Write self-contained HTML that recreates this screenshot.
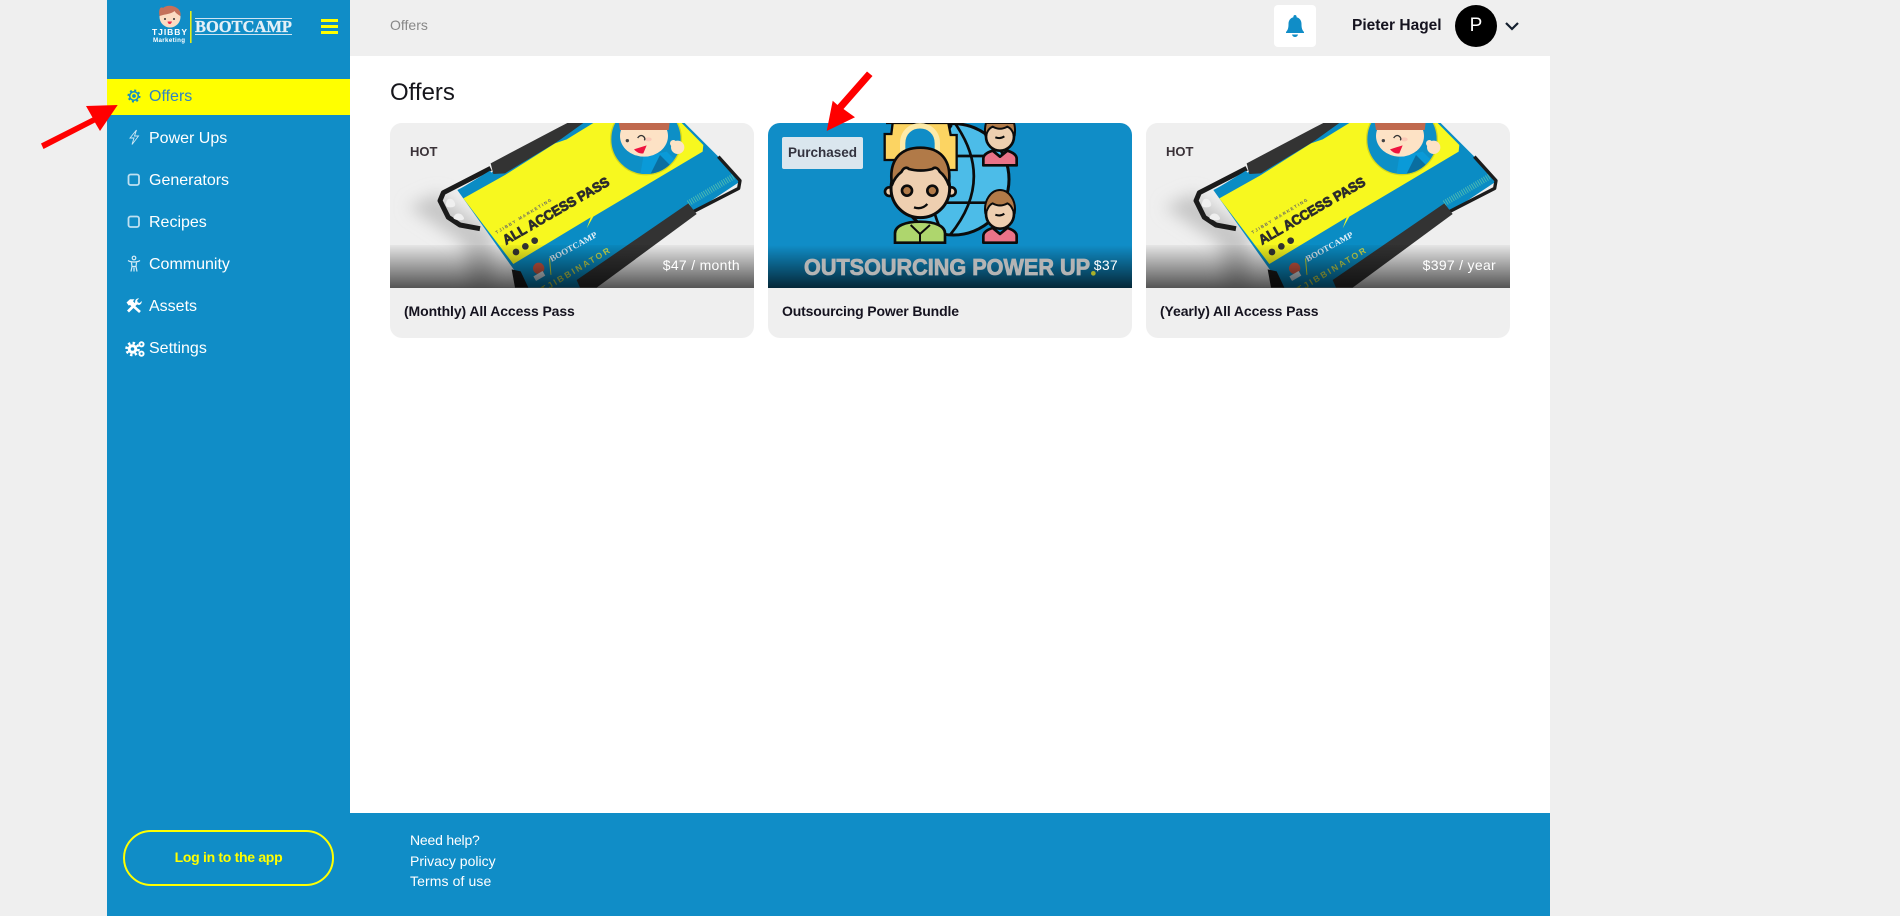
<!DOCTYPE html>
<html lang="en"><head><meta charset="utf-8"><title>Offers</title>
<style>
*{box-sizing:border-box}
html,body{margin:0;padding:0;width:1900px;height:916px;overflow:hidden;background:#efefef;font-family:"Liberation Sans",Arial,sans-serif;color:#111}
.a{position:absolute;white-space:nowrap}
#side{position:absolute;left:107px;top:0;width:243px;height:916px;background:#108dc7}
#main{position:absolute;left:350px;top:56px;width:1200px;height:757px;background:#fff}
#foot{position:absolute;left:107px;top:813px;width:1443px;height:103px;background:#108dc7}
#sel{position:absolute;left:107px;top:79px;width:243px;height:36px;background:#ff0}
.n{position:absolute;left:149px;font-size:16px;line-height:20px;color:#fff;white-space:nowrap}
.i{position:absolute;left:125px;width:18px;height:18px}
.card{position:absolute;top:123px;width:364px;height:215px;background:#efefef;border-radius:12px;overflow:hidden}
.card svg{position:absolute;left:0;top:0;width:364px;height:165px;display:block}
.tt{position:absolute;left:14px;top:179px;font-size:14px;line-height:18px;font-weight:bold;color:#15131f;white-space:nowrap;letter-spacing:-.1px}
.pr{position:absolute;right:14px;top:133px;font-size:14px;line-height:18px;color:#fff;white-space:nowrap;letter-spacing:.3px}
.hot{position:absolute;left:20px;top:20px;font-size:13px;line-height:18px;font-weight:bold;color:#3a3238}
.f{position:absolute;left:410px;font-size:14px;line-height:18px;color:#fff;white-space:nowrap}
</style></head><body>
<svg width="0" height="0" style="position:absolute"><defs>
<linearGradient id="g1" x1="0" y1="0" x2="0" y2="1"><stop offset="0" stop-color="#000" stop-opacity=".04"/><stop offset="1" stop-color="#000" stop-opacity=".65"/></linearGradient>
<linearGradient id="g2" x1="0" y1="0" x2="0" y2="1"><stop offset="0" stop-color="#000" stop-opacity="0"/><stop offset="1" stop-color="#000" stop-opacity=".72"/></linearGradient>
<filter id="b1" x="-40%" y="-40%" width="180%" height="180%"><feGaussianBlur stdDeviation="24"/></filter>
<clipPath id="cc"><circle cx="798" cy="88" r="104"/></clipPath>
</defs></svg>
<div id="side"></div><div id="main"></div><div id="foot"></div><div id="sel"></div>

<!-- logo -->
<svg class="a" style="left:150px;top:4px" width="150" height="42" viewBox="0 0 150 42">
<circle cx="20" cy="13" r="10.500" fill="#fcdcc3"/>
<path d="M9.500 12C8 5 11 2 13 4c3-3 10-3 14 0 3 2 4 5 3.500 8-2-1-5-3-6-5-3 3-9 3-15 5z" fill="#c5705a"/>
<circle cx="15" cy="15" r="1" fill="#333"/><circle cx="24" cy="15" r="1" fill="#333"/>
<path d="M17.500 17.500h4.500q-1 3-2.500 2.500-1.500 0-2-2.500z" fill="#ef2a4a"/>
<text x="2" y="31" font-family="Liberation Sans,sans-serif" font-size="8.500" font-weight="bold" fill="#fff" textLength="35">TJIBBY</text>
<text x="3" y="38" font-family="Liberation Sans,sans-serif" font-size="6.200" font-weight="bold" fill="#fff" textLength="32">Marketing</text>
<rect x="40" y="7" width="1.600" height="32" fill="#e3ee16"/>
<rect x="45" y="14" width="97" height="1" fill="#cfe4f1"/>
<rect x="45" y="30" width="97" height="1" fill="#cfe4f1"/>
<text x="45" y="28" font-family="Liberation Serif,serif" font-size="17" font-weight="bold" fill="#e4f0f7" stroke="#e4f0f7" stroke-width=".3" textLength="97" lengthAdjust="spacingAndGlyphs">BOOTCAMP</text>
</svg>
<svg class="a" style="left:321px;top:18px" width="17" height="16"><rect y="1" width="17" height="3" fill="#ff0"/><rect y="7" width="17" height="3" fill="#ff0"/><rect y="13" width="17" height="3" fill="#ff0"/></svg>

<!-- nav icons -->
<svg class="i" style="top:87px" viewBox="0 0 18 18" fill="none" stroke="#108dc7"><circle cx="9" cy="9" r="1.900" fill="#108dc7" stroke="none"/><circle cx="9" cy="9" r="4.300" stroke-width="1.500"/><circle cx="9" cy="9" r="5.700" stroke-width="1.700" stroke-dasharray="2 2.480"/></svg>
<svg class="i" style="top:128px" viewBox="0 0 18 18" fill="none" stroke="#cfe8f5" stroke-width=".9"><path d="M11.500 2 5 10h4l-2 6.500L13.500 8H9.500z"/></svg>
<svg class="i" style="top:171px" viewBox="0 0 18 18" fill="none" stroke="#bfe0f1" stroke-width="1.800"><rect x="3.500" y="3.500" width="10.500" height="10.500" rx="2"/></svg>
<svg class="i" style="top:213px" viewBox="0 0 18 18" fill="none" stroke="#bfe0f1" stroke-width="1.800"><rect x="3.500" y="3.500" width="10.500" height="10.500" rx="2"/></svg>
<svg class="i" style="top:255px" viewBox="0 0 18 18" fill="none" stroke="#d6ecf7" stroke-width="1.200"><circle cx="9" cy="3" r="1.800"/><path d="M3 5.500c3 2 9 2 12 0M6.500 7.500l.5 4-1 5M11.500 7.500l-.5 4 1 5M7 11.500h4M9 12.500v4"/></svg>
<svg class="i" style="top:297px" viewBox="0 0 18 18" fill="#fff"><path d="M6.500 7.500 15 15" stroke="#fff" stroke-width="2.700" fill="none"/><path d="M1.500 5.500 5 2.300h4.500L8 4.300 9.800 6.200 6.500 9.300 5 7.900 3.800 8.600z"/><path d="M3 14.500 12 5.500" stroke="#fff" stroke-width="2.700" fill="none"/><path d="M16.700 4 14.700 6 12.700 5.400 12.100 3.400 14.100 1.400C11.500 1 9.700 3 10.300 5.500L12.700 7.800C15 8.400 17 6.500 16.700 4z"/></svg>
<svg class="a" style="left:125px;top:340px" width="20" height="18" viewBox="0 0 20 18"><circle cx="7.500" cy="9" r="4.800" fill="#fff"/><circle cx="7.500" cy="9" r="6" fill="none" stroke="#fff" stroke-width="2.600" stroke-dasharray="2.400 2.300"/><circle cx="7.500" cy="9" r="1.800" fill="#108dc7"/><circle cx="16.500" cy="4.300" r="2.100" fill="none" stroke="#fff" stroke-width="1.900"/><circle cx="16.500" cy="13.700" r="2.100" fill="none" stroke="#fff" stroke-width="1.900"/></svg>

<!-- nav text -->
<div class="n" style="top:87px;color:#2f84c4">Offers</div>
<div class="n" style="top:129px">Power Ups</div>
<div class="n" style="top:171px">Generators</div>
<div class="n" style="top:213px">Recipes</div>
<div class="n" style="top:255px">Community</div>
<div class="n" style="top:297px">Assets</div>
<div class="n" style="top:339px">Settings</div>

<!-- top bar -->
<div class="a" style="left:390px;top:16px;font-size:14px;line-height:18px;color:#888">Offers</div>
<div class="a" style="left:1274px;top:5px;width:42px;height:42px;background:#fff;border-radius:4px"></div>
<svg class="a" style="left:1284px;top:14px" width="22" height="24" viewBox="0 0 22 24" fill="#108dc7"><path d="M11 1c-1 0-1.600.7-1.600 1.600v.6C6.200 4 4.500 6.500 4.500 10c0 4-.6 6-2.500 8v1h18v-1c-1.900-2-2.500-4-2.500-8 0-3.500-1.700-6-4.900-6.800v-.6C12.600 1.700 12 1 11 1z"/><path d="M8 20.500h6c-.4 1.600-1.500 2.500-3 2.500s-2.600-.9-3-2.500z"/></svg>
<div class="a" style="left:1352px;top:17px;font-size:15.500px;line-height:18px;font-weight:bold;color:#15131f">Pieter Hagel</div>
<div class="a" style="left:1455px;top:5px;width:42px;height:42px;border-radius:50%;background:#000;color:#fff;font-size:19px;line-height:42px;text-align:center">P</div>
<svg class="a" style="left:1504px;top:21px" width="16" height="11" fill="none" stroke="#15202f" stroke-width="2.200"><path d="M2 2l6 6 6-6"/></svg>

<div class="a" style="left:390px;top:79px;font-size:24px;line-height:28px;color:#16161c">Offers</div>

<!-- card 1 -->
<div class="card" style="left:390px">
<svg viewBox="30 39 1092 495">
<rect x="30" y="39" width="1092" height="495" fill="#efefef"/>
<path d="M85 290 175 250 340 370 340 533H270L250 400z" fill="#c6c6c6" filter="url(#b1)"/>
<path d="M232 240 640 30 905 30 1015 140 1078 216 600 533H440z" fill="#0a8cc4"/>
<path d="M250 265 375 195 525 100 620 39H905L970 105 968 125 640 320 620 355 632 322 400 462z" fill="#f7f81f"/>
<circle cx="798" cy="88" r="106" fill="#0d8fc6" stroke="#d6d81a" stroke-width="4"/>
<g clip-path="url(#cc)">
<path d="M780 200 790 140 860 125 905 170z" fill="#0a9ad8"/>
<path d="M840 135 880 175 810 195z" fill="#0a6ea0"/>
<ellipse cx="792" cy="78" rx="72" ry="62" fill="#fde2c5"/>
<path d="M715 30H870L866 60 720 60z" fill="#c0694e"/>
<path d="M762 118 800 106 790 130q-15 3-28-12z" fill="#ef143f"/>
<circle cx="742" cy="92" r="5" fill="#444"/>
<ellipse cx="805" cy="88" rx="10" ry="6" fill="#fbc9b8"/>
</g>
<circle cx="893" cy="112" r="20" fill="#fde2c5"/><circle cx="880" cy="100" r="10" fill="#fde2c5"/>
<path d="M773 84q10-14 20-2 3 5 0 9" fill="none" stroke="#333" stroke-width="4"/>
<path d="M300 356 240 345 205 322 180 272 190 248 332 175" fill="none" stroke="#1b1b1b" stroke-width="15" stroke-linejoin="round"/>
<path d="M235 240 330 182 335 190 250 262z" fill="#0a8cc4"/>
<path d="M332 160 525 58 562 39H625L375 190 340 192z" fill="#333"/>
<path d="M525 100 610 39H640L560 88z" fill="#0a8cc4"/>
<path d="M203 268q14-6 21 9t-14 15-7-24zM228 312q14-5 22 8t-16 10-6-18z" fill="#efefef"/>
<path d="M1015 140 1080 212 1076 235 930 310" fill="none" stroke="#1c1c1c" stroke-width="10" stroke-linejoin="round"/>
<path d="M925 280 1060 200" stroke="#49b8b5" stroke-width="18" stroke-dasharray="3 4" fill="none"/>
<path d="M590 510 925 280 950 312 650 533H600z" fill="#333"/>
<path d="M395 478 422 484 445 533H405z" fill="#1b1b1b"/>
<text transform="translate(378,405) rotate(-30)" font-family="Liberation Sans,sans-serif" font-size="41" font-weight="bold" fill="#2c2c2c" stroke="#2c2c2c" stroke-width="2.400" textLength="362" lengthAdjust="spacingAndGlyphs">ALL ACCESS PASS</text>
<text transform="translate(350,372) rotate(-31)" font-family="Liberation Sans,sans-serif" font-size="13" font-weight="bold" fill="#666" textLength="193">TJIBBY MARKETING</text>
<circle cx="408" cy="426" r="10" fill="#333"/><circle cx="436" cy="409" r="10" fill="#333"/><circle cx="464" cy="392" r="10" fill="#333"/>
<text transform="translate(515,456) rotate(-29)" font-family="Liberation Serif,serif" font-size="26" font-weight="bold" fill="#e4f0f7" textLength="158" lengthAdjust="spacingAndGlyphs">BOOTCAMP</text>
<rect x="507" y="445" width="3" height="50" fill="#d6df2b" transform="rotate(-5 507 445)"/>
<text transform="translate(490,548) rotate(-31)" font-family="Liberation Sans,sans-serif" font-size="26" font-weight="bold" fill="#c9dc50" textLength="235">TJIBBINATOR</text>
<circle cx="476" cy="475" r="17" fill="#d25a44"/><rect x="462" y="490" width="32" height="16" fill="#d9e7ee" transform="rotate(-30 478 498)"/>
<rect x="30" y="405" width="1092" height="129" fill="url(#g1)"/>
</svg>
<div class="hot">HOT</div>
<div class="pr">$47 / month</div>
<div class="tt">(Monthly) All Access Pass</div>
</div>

<!-- card 2 -->
<div class="card" style="left:768px">
<svg viewBox="24 189 1092 495">
<rect x="24" y="189" width="1092" height="495" fill="#108dc7"/>
<circle cx="580" cy="358" r="167" fill="#4cbce8" stroke="#0b0b0b" stroke-width="9"/>
<path d="M585 190q120 170-15 335M575 195q-110 150-30 320M590 288H690M530 428H690" fill="none" stroke="#0b0b0b" stroke-width="8"/>
<path d="M378 189H398L394 222H374V300H420V330H590V225H572L565 189z" fill="#fcd462" stroke="#0b0b0b" stroke-width="7"/>
<path d="M428 280V250c0-70 104-70 104 0V280" fill="#108dc7" stroke="#fdeaa8" stroke-width="16"/>
<path d="M405 548V520c0-22 30-35 75-35s75 13 75 35v28z" fill="#aed66d" stroke="#0b0b0b" stroke-width="8"/>
<path d="M452 495 480 522 510 495M480 522v26" fill="none" stroke="#0b0b0b" stroke-width="6"/>
<circle cx="388" cy="395" r="13" fill="#eecfb0" stroke="#0b0b0b" stroke-width="8"/>
<circle cx="574" cy="395" r="13" fill="#eecfb0" stroke="#0b0b0b" stroke-width="8"/>
<circle cx="481" cy="385" r="88" fill="#eecfb0" stroke="#0b0b0b" stroke-width="9"/>
<path d="M396 375c-12-80 30-112 85-112s97 32 85 112c-6-18-14-30-27-40-5-12-15-15-22-8-20 6-50 6-70 0-7-7-17-4-22 8-13 10-23 22-29 40z" fill="#b17a48" stroke="#0b0b0b" stroke-width="8" stroke-linejoin="round"/>
<circle cx="441" cy="392" r="15" fill="#b17a48" stroke="#0b0b0b" stroke-width="8"/>
<circle cx="517" cy="392" r="15" fill="#b17a48" stroke="#0b0b0b" stroke-width="8"/>
<path d="M462 442q24 8 40-10" fill="none" stroke="#0b0b0b" stroke-width="7"/>
<path d="M670 548v-20c0-12 15-20 28-24l22 18 22-18c13 4 28 12 28 24v20z" fill="#ea7388" stroke="#0b0b0b" stroke-width="8" stroke-linejoin="round"/>
<ellipse cx="720" cy="462" rx="42" ry="44" fill="#eecfb0" stroke="#0b0b0b" stroke-width="8"/>
<path d="M676 460c-6-40 18-70 44-70s50 30 44 70c-8-14-10-25-22-30-14 8-30 8-44 0-12 5-14 16-22 30z" fill="#b17a48" stroke="#0b0b0b" stroke-width="6" stroke-linejoin="round"/>
<path d="M706 464q15 6 27-3" fill="none" stroke="#0b0b0b" stroke-width="6"/>
<path d="M670 316v-20c0-12 15-20 28-24l22 18 22-18c13 4 28 12 28 24v20z" fill="#ea7388" stroke="#0b0b0b" stroke-width="8" stroke-linejoin="round"/>
<ellipse cx="720" cy="230" rx="42" ry="42" fill="#eecfb0" stroke="#0b0b0b" stroke-width="8"/>
<path d="M678 189h84c4 14 4 24 2 38-8-14-10-22-22-27-14 8-30 8-44 0-12 5-14 13-22 27-2-14-2-24 2-38z" fill="#b17a48" stroke="#0b0b0b" stroke-width="6" stroke-linejoin="round"/>
<path d="M706 232q15 6 27-3" fill="none" stroke="#0b0b0b" stroke-width="6"/>
<rect x="24" y="555" width="1092" height="129" fill="url(#g2)"/>
<text x="132" y="645" font-family="Liberation Sans,sans-serif" font-size="68" font-weight="bold" fill="#b4b4b4" stroke="#b4b4b4" stroke-width="2.500" textLength="858" lengthAdjust="spacingAndGlyphs">OUTSOURCING POWER UP</text>
<circle cx="1000" cy="640" r="7" fill="#a8b02a"/>
</svg>
<div class="a" style="left:14px;top:14px;width:81px;height:32px;background:#dae6ee;border-radius:2px;font-size:13.500px;line-height:32px;text-align:center;font-weight:bold;color:#33333f">Purchased</div>
<div class="pr">$37</div>
<div class="tt" style="letter-spacing:-.15px">Outsourcing Power Bundle</div>
</div>

<!-- card 3 -->
<div class="card" style="left:1146px">
<svg viewBox="48 39 1092 495">
<rect x="48" y="39" width="1092" height="495" fill="#efefef"/>
<g transform="translate(18,0)">
<path d="M85 290 175 250 340 370 340 533H270L250 400z" fill="#c6c6c6" filter="url(#b1)"/>
<path d="M232 240 640 30 905 30 1015 140 1078 216 600 533H440z" fill="#0a8cc4"/>
<path d="M250 265 375 195 525 100 620 39H905L970 105 968 125 640 320 620 355 632 322 400 462z" fill="#f7f81f"/>
<circle cx="798" cy="88" r="106" fill="#0d8fc6" stroke="#d6d81a" stroke-width="4"/>
<g clip-path="url(#cc)">
<path d="M780 200 790 140 860 125 905 170z" fill="#0a9ad8"/>
<path d="M840 135 880 175 810 195z" fill="#0a6ea0"/>
<ellipse cx="792" cy="78" rx="72" ry="62" fill="#fde2c5"/>
<path d="M715 30H870L866 60 720 60z" fill="#c0694e"/>
<path d="M762 118 800 106 790 130q-15 3-28-12z" fill="#ef143f"/>
<circle cx="742" cy="92" r="5" fill="#444"/>
<ellipse cx="805" cy="88" rx="10" ry="6" fill="#fbc9b8"/>
</g>
<circle cx="893" cy="112" r="20" fill="#fde2c5"/><circle cx="880" cy="100" r="10" fill="#fde2c5"/>
<path d="M773 84q10-14 20-2 3 5 0 9" fill="none" stroke="#333" stroke-width="4"/>
<path d="M300 356 240 345 205 322 180 272 190 248 332 175" fill="none" stroke="#1b1b1b" stroke-width="15" stroke-linejoin="round"/>
<path d="M235 240 330 182 335 190 250 262z" fill="#0a8cc4"/>
<path d="M332 160 525 58 562 39H625L375 190 340 192z" fill="#333"/>
<path d="M525 100 610 39H640L560 88z" fill="#0a8cc4"/>
<path d="M203 268q14-6 21 9t-14 15-7-24zM228 312q14-5 22 8t-16 10-6-18z" fill="#efefef"/>
<path d="M1015 140 1080 212 1076 235 930 310" fill="none" stroke="#1c1c1c" stroke-width="10" stroke-linejoin="round"/>
<path d="M925 280 1060 200" stroke="#49b8b5" stroke-width="18" stroke-dasharray="3 4" fill="none"/>
<path d="M590 510 925 280 950 312 650 533H600z" fill="#333"/>
<path d="M395 478 422 484 445 533H405z" fill="#1b1b1b"/>
<text transform="translate(378,405) rotate(-30)" font-family="Liberation Sans,sans-serif" font-size="41" font-weight="bold" fill="#2c2c2c" stroke="#2c2c2c" stroke-width="2.400" textLength="362" lengthAdjust="spacingAndGlyphs">ALL ACCESS PASS</text>
<text transform="translate(350,372) rotate(-31)" font-family="Liberation Sans,sans-serif" font-size="13" font-weight="bold" fill="#666" textLength="193">TJIBBY MARKETING</text>
<circle cx="408" cy="426" r="10" fill="#333"/><circle cx="436" cy="409" r="10" fill="#333"/><circle cx="464" cy="392" r="10" fill="#333"/>
<text transform="translate(515,456) rotate(-29)" font-family="Liberation Serif,serif" font-size="26" font-weight="bold" fill="#e4f0f7" textLength="158" lengthAdjust="spacingAndGlyphs">BOOTCAMP</text>
<rect x="507" y="445" width="3" height="50" fill="#d6df2b" transform="rotate(-5 507 445)"/>
<text transform="translate(490,548) rotate(-31)" font-family="Liberation Sans,sans-serif" font-size="26" font-weight="bold" fill="#c9dc50" textLength="235">TJIBBINATOR</text>
<circle cx="476" cy="475" r="17" fill="#d25a44"/><rect x="462" y="490" width="32" height="16" fill="#d9e7ee" transform="rotate(-30 478 498)"/>
</g>
<rect x="48" y="405" width="1092" height="129" fill="url(#g1)"/>
</svg>
<div class="hot">HOT</div>
<div class="pr">$397 / year</div>
<div class="tt">(Yearly) All Access Pass</div>
</div>

<!-- footer -->
<div class="a" style="left:123px;top:830px;width:211px;height:56px;border:2px solid #ff0;border-radius:28px;color:#ff0;font-size:14px;font-weight:bold;line-height:50px;text-align:center;letter-spacing:-.3px">Log in to the app</div>
<div class="f" style="top:831px;letter-spacing:-.2px">Need help?</div>
<div class="f" style="top:852px">Privacy policy</div>
<div class="f" style="top:872px;letter-spacing:.1px">Terms of use</div>

<!-- annotations -->
<svg class="a" style="left:0;top:0;pointer-events:none" width="1900" height="916">
<path fill="#ff0000" d="M117.700 105 86 106 92.500 117.500 41 143.500 43.500 149 95 122.500 100 131z"/>
<path fill="#ff0000" d="M826.700 131 855 117.300 843.500 109 872.500 76 867 71.500 837.500 105 832.700 100.700z"/>
</svg>
</body></html>
